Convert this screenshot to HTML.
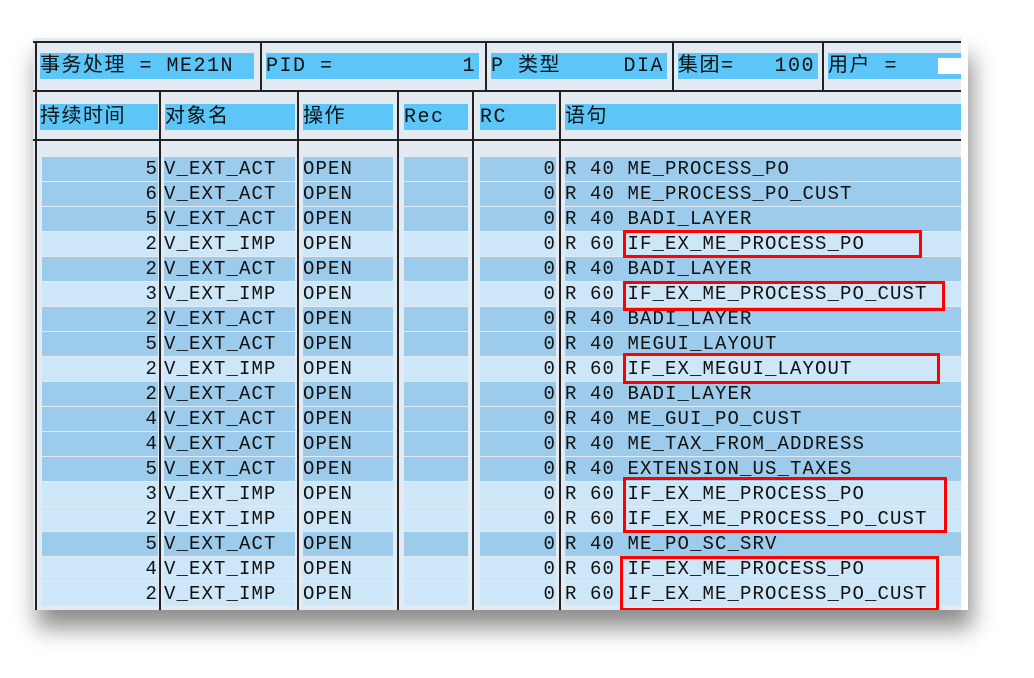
<!DOCTYPE html>
<html><head><meta charset="utf-8"><style>
body{margin:0;width:1034px;height:678px;background:#fff;position:relative;overflow:hidden;font-family:"Liberation Mono","Noto Sans CJK SC",monospace;}
#f{position:absolute;left:33px;top:38px;width:935px;height:572px;background:#e3eaf2;box-shadow:4px 18px 22px rgba(0,0,0,0.45);overflow:hidden;}
.v{position:absolute;width:2px;background:#222;}
.h{position:absolute;height:2px;background:#222;}
.c{position:absolute;height:24px;line-height:25px;font-size:19px;color:#111;white-space:pre;letter-spacing:1.1px;overflow:hidden}
.hd{background:#5cc6f8;height:26px;line-height:27px;font-size:20px;letter-spacing:1.5px}
.rt{position:absolute;right:3px;top:0}
.d .c{background:#9dcbeb}
.l .c{background:#cde6f8}
.r{position:absolute;left:0;width:935px;height:25px}
.a{left:9px;width:116px;text-align:right}
.b{left:131px;width:131px}
.o{left:270px;width:90px}
.e{left:371px;width:64px}
.g{left:447px;width:76px;text-align:right}
.s{left:532px;width:396px}
.box{position:absolute;border:3px solid #f00;}
</style></head><body>
<div id="f">
<div class="h" style="left:0;top:3px;width:935px"></div>
<div class="h" style="left:0;top:52px;width:935px"></div>
<div class="h" style="left:0;top:101px;width:935px"></div>
<div class="v" style="left:2px;top:3px;height:572px"></div>
<div class="v" style="left:227px;top:3px;height:50px"></div>
<div class="v" style="left:452px;top:3px;height:50px"></div>
<div class="v" style="left:639px;top:3px;height:50px"></div>
<div class="v" style="left:789px;top:3px;height:50px"></div>
<div class="v" style="left:126px;top:52px;height:520px"></div>
<div class="v" style="left:264px;top:52px;height:520px"></div>
<div class="v" style="left:364px;top:52px;height:520px"></div>
<div class="v" style="left:439px;top:52px;height:520px"></div>
<div class="v" style="left:526px;top:52px;height:520px"></div>

<div class="c hd" style="left:7px;top:15px;width:214px">事务处理 = ME21N</div>
<div class="c hd" style="left:233px;top:15px;width:213px">PID =<span class="rt">1</span></div>
<div class="c hd" style="left:458px;top:15px;width:176px">P 类型<span class="rt">DIA</span></div>
<div class="c hd" style="left:645px;top:15px;width:140px">集团=<span class="rt">100</span></div>
<div class="c hd" style="left:795px;top:15px;width:140px">用户 =</div>
<div class="c" style="left:905px;top:20px;width:30px;height:16px;background:#fff"></div>

<div class="c hd" style="left:7px;top:66px;width:118px">持续时间</div>
<div class="c hd" style="left:132px;top:66px;width:130px">对象名</div>
<div class="c hd" style="left:270px;top:66px;width:90px">操作</div>
<div class="c hd" style="left:371px;top:66px;width:64px">Rec</div>
<div class="c hd" style="left:447px;top:66px;width:76px">RC</div>
<div class="c hd" style="left:532px;top:66px;width:403px">语句</div>

<div class="r d" style="top:119px"><div class="c a">5</div><div class="c b">V_EXT_ACT</div><div class="c o">OPEN</div><div class="c e"></div><div class="c g">0</div><div class="c s">R 40 ME_PROCESS_PO</div></div>
<div class="r d" style="top:144px"><div class="c a">6</div><div class="c b">V_EXT_ACT</div><div class="c o">OPEN</div><div class="c e"></div><div class="c g">0</div><div class="c s">R 40 ME_PROCESS_PO_CUST</div></div>
<div class="r d" style="top:169px"><div class="c a">5</div><div class="c b">V_EXT_ACT</div><div class="c o">OPEN</div><div class="c e"></div><div class="c g">0</div><div class="c s">R 40 BADI_LAYER</div></div>
<div class="r l" style="top:194px"><div class="c a">2</div><div class="c b">V_EXT_IMP</div><div class="c o">OPEN</div><div class="c e"></div><div class="c g">0</div><div class="c s">R 60 IF_EX_ME_PROCESS_PO</div></div>
<div class="r d" style="top:219px"><div class="c a">2</div><div class="c b">V_EXT_ACT</div><div class="c o">OPEN</div><div class="c e"></div><div class="c g">0</div><div class="c s">R 40 BADI_LAYER</div></div>
<div class="r l" style="top:244px"><div class="c a">3</div><div class="c b">V_EXT_IMP</div><div class="c o">OPEN</div><div class="c e"></div><div class="c g">0</div><div class="c s">R 60 IF_EX_ME_PROCESS_PO_CUST</div></div>
<div class="r d" style="top:269px"><div class="c a">2</div><div class="c b">V_EXT_ACT</div><div class="c o">OPEN</div><div class="c e"></div><div class="c g">0</div><div class="c s">R 40 BADI_LAYER</div></div>
<div class="r d" style="top:294px"><div class="c a">5</div><div class="c b">V_EXT_ACT</div><div class="c o">OPEN</div><div class="c e"></div><div class="c g">0</div><div class="c s">R 40 MEGUI_LAYOUT</div></div>
<div class="r l" style="top:319px"><div class="c a">2</div><div class="c b">V_EXT_IMP</div><div class="c o">OPEN</div><div class="c e"></div><div class="c g">0</div><div class="c s">R 60 IF_EX_MEGUI_LAYOUT</div></div>
<div class="r d" style="top:344px"><div class="c a">2</div><div class="c b">V_EXT_ACT</div><div class="c o">OPEN</div><div class="c e"></div><div class="c g">0</div><div class="c s">R 40 BADI_LAYER</div></div>
<div class="r d" style="top:369px"><div class="c a">4</div><div class="c b">V_EXT_ACT</div><div class="c o">OPEN</div><div class="c e"></div><div class="c g">0</div><div class="c s">R 40 ME_GUI_PO_CUST</div></div>
<div class="r d" style="top:394px"><div class="c a">4</div><div class="c b">V_EXT_ACT</div><div class="c o">OPEN</div><div class="c e"></div><div class="c g">0</div><div class="c s">R 40 ME_TAX_FROM_ADDRESS</div></div>
<div class="r d" style="top:419px"><div class="c a">5</div><div class="c b">V_EXT_ACT</div><div class="c o">OPEN</div><div class="c e"></div><div class="c g">0</div><div class="c s">R 40 EXTENSION_US_TAXES</div></div>
<div class="r l" style="top:444px"><div class="c a">3</div><div class="c b">V_EXT_IMP</div><div class="c o">OPEN</div><div class="c e"></div><div class="c g">0</div><div class="c s">R 60 IF_EX_ME_PROCESS_PO</div></div>
<div class="r l" style="top:469px"><div class="c a">2</div><div class="c b">V_EXT_IMP</div><div class="c o">OPEN</div><div class="c e"></div><div class="c g">0</div><div class="c s">R 60 IF_EX_ME_PROCESS_PO_CUST</div></div>
<div class="r d" style="top:494px"><div class="c a">5</div><div class="c b">V_EXT_ACT</div><div class="c o">OPEN</div><div class="c e"></div><div class="c g">0</div><div class="c s">R 40 ME_PO_SC_SRV</div></div>
<div class="r l" style="top:519px"><div class="c a">4</div><div class="c b">V_EXT_IMP</div><div class="c o">OPEN</div><div class="c e"></div><div class="c g">0</div><div class="c s">R 60 IF_EX_ME_PROCESS_PO</div></div>
<div class="r l" style="top:544px"><div class="c a">2</div><div class="c b">V_EXT_IMP</div><div class="c o">OPEN</div><div class="c e"></div><div class="c g">0</div><div class="c s">R 60 IF_EX_ME_PROCESS_PO_CUST</div></div>

<div class="box" style="left:590px;top:192px;width:293px;height:22px"></div>
<div class="box" style="left:590px;top:243px;width:316px;height:24px"></div>
<div class="box" style="left:590px;top:315px;width:311px;height:25px"></div>
<div class="box" style="left:590px;top:439px;width:318px;height:50px"></div>
<div class="box" style="left:587px;top:518px;width:313px;height:49px"></div>
<div style="position:absolute;left:928px;top:0;width:7px;height:572px;background:#fff"></div>
</div>
</body></html>
